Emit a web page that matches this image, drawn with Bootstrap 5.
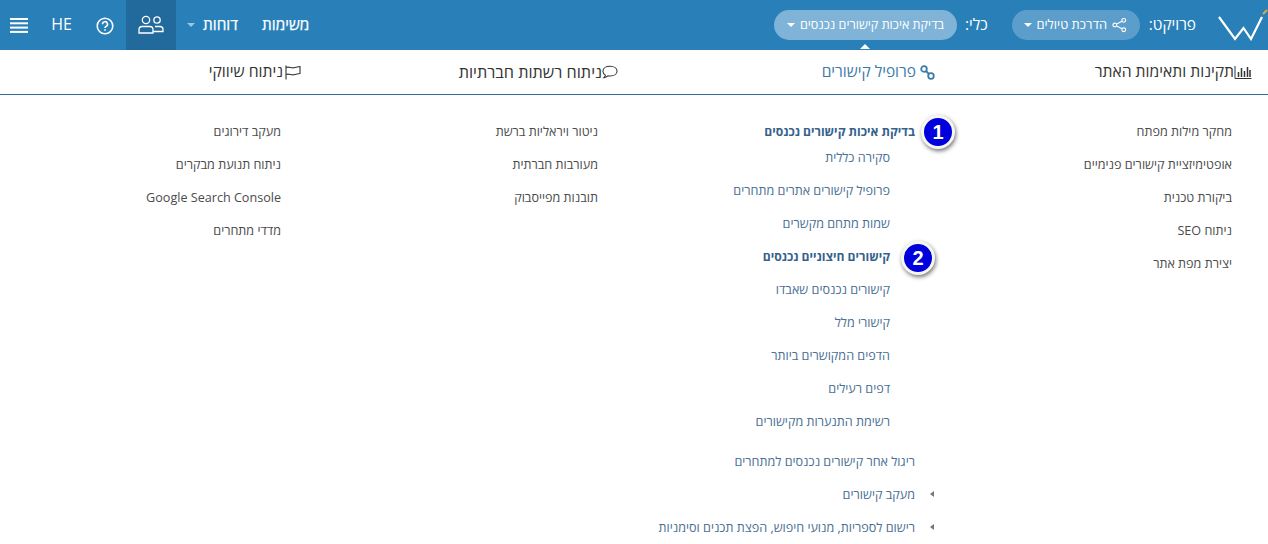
<!doctype html>
<html lang="he" dir="rtl">
<head>
<meta charset="utf-8">
<title>Menu</title>
<link href="https://cdn.jsdelivr.net/npm/bootstrap@5.3.0/dist/css/bootstrap.min.css" rel="stylesheet">
<style>
body{font-family:"Open Sans","Liberation Sans","DejaVu Sans",sans-serif;background:#fff;height:544px;overflow:hidden}
.topbar{height:50px;background:#2980b9;color:#fff}
.logo-box{width:72px}
.proj-label{font-size:15.4px;margin-left:8px}
.label-first{margin-left:9px}
.pill-a,.pill-b{height:30px;border-radius:15px;color:#fff;white-space:nowrap}
.pill-a{width:128px;background:#5b9dcb;padding:0 13px 0 12px;margin-left:24px;font-size:12.9px}
.pill-b{width:183px;background:#7fb3d7;position:relative;padding:0 13px;font-size:12.6px}
.pill-b::after{content:"";position:absolute;left:86px;top:34px;border:5px solid transparent;border-top:0;border-bottom-color:#fff}
.caret-w{width:0;height:0;border:4px solid transparent;border-top-color:#fff;border-bottom:0}
.caret-dim{border-top-color:#9cc5e0;margin-right:8px}
.nav-txt{font-size:15.4px;color:#fff;-webkit-text-stroke:.25px #fff}
.reports-txt{margin-right:24px}
.user-box{width:50px;height:50px;background:#236a9c;margin-right:11px}
.help-box{margin-right:12px;margin-top:2px}
.he-txt{font-size:16px;width:21px;margin-right:24px;text-align:center;line-height:1;margin-bottom:2px}
.burger-box{margin:0 23px 0 10px;line-height:0;margin-top:1px}
.tabs-row{height:45px;border-bottom:1px solid #2e6f94;display:grid;grid-template-columns:repeat(4,1fr)}
.tab-it{padding-right:16px;font-size:15.7px;color:#333;gap:2px}
.tab-tight{gap:0}
.tab-it.on{color:#3b7ca8;font-size:15.5px;gap:4px}
.tab-wide{font-size:16.2px}
.menu-grid{display:grid;grid-template-columns:repeat(4,1fr);padding-top:20px}
.menu-col{padding-right:36px}
.mi{height:33px;font-size:12.6px;color:#4b4b4b;line-height:33px;white-space:nowrap}
.mi-link{color:#4a6f94;position:relative}
.mi-head{font-weight:700;font-size:12.15px;color:#35628c}
.mi-top{height:26px;line-height:33px}
.mi-sub{padding-right:25px}
.mi-last{height:40px;line-height:33px}
.mi-arrow{display:flex;align-items:flex-start;position:relative}
.mi-arrow::before{content:"";position:absolute;right:-19px;top:13px;border:3px solid transparent;border-left:0;border-right:4px solid #777}
.num-dot{position:absolute;width:34px;height:34px;border-radius:50%;background:#0000dd;border:3px solid #f6f6f0;box-shadow:1px 2px 4px rgba(0,0,0,.55);color:#fff;font:700 20px/28px "Liberation Sans",sans-serif;text-align:center}
.num-1{right:-40px;top:-8px}
.num-2{right:-45px;top:-7px}
</style>
</head>
<body>
<header class="topbar d-flex justify-content-between align-items-center">
  <div class="d-flex align-items-center">
    <div class="logo-box d-flex align-items-center justify-content-start">
      <svg width="50" height="32" viewBox="0 0 50 32"><path d="M1 8 L17 30 L25.500 19 L33 30 L44 8" fill="none" stroke="#fff" stroke-width="2.200"/><path d="M45 5 L49 1" stroke="#e8a23c" stroke-width="2"/></svg>
    </div>
    <span class="proj-label label-first">פרויקט:</span>
    <div class="pill-a d-flex align-items-center justify-content-between">
      <svg width="15" height="16" viewBox="0 0 16 16" fill="none" stroke="#fff" stroke-width="1.2"><circle cx="12.500" cy="3" r="2"/><circle cx="12.500" cy="13" r="2"/><circle cx="3" cy="8" r="2"/><path d="M5 7 10.700 4M5 9l5.700 3"/></svg>
      <span>הדרכת טיולים</span>
      <span class="caret-w"></span>
    </div>
    <span class="proj-label">כלי:</span>
    <div class="pill-b d-flex align-items-center justify-content-between">
      <span>בדיקת איכות קישורים נכנסים</span>
      <span class="caret-w"></span>
    </div>
  </div>
  <div class="d-flex align-items-center">
    <span class="nav-txt">משימות</span>
    <span class="nav-txt reports-txt">דוחות</span>
    <span class="caret-w caret-dim"></span>
    <div class="user-box d-flex align-items-center justify-content-center">
      <svg width="26" height="20" viewBox="0 0 26 20" fill="none" stroke="#fff" stroke-width="1.300"><circle cx="8" cy="5" r="3.700"/><circle cx="19" cy="5" r="3.200"/><path d="M1 18v-3q0-3.500 3-3.500h8q3 0 3 3.500v3z"/><path d="M17 11.500h5q3 0 3 3v2h-10"/></svg>
    </div>
    <div class="help-box d-flex align-items-center">
      <svg width="18" height="18" viewBox="0 0 18 18" fill="none" stroke="#fff" stroke-width="1.600"><circle cx="9" cy="9" r="7.800"/><path d="M6.500 7.200a2.500 2.500 0 1 1 3.600 2.200q-1.100.6-1.100 1.700"/><path d="M9 12.300v1.400"/></svg>
    </div>
    <span class="he-txt" dir="ltr">HE</span>
    <div class="burger-box">
      <svg width="18" height="15" viewBox="0 0 18 15" fill="#fff"><rect y="0" width="18" height="2"/><rect y="4.300" width="18" height="2"/><rect y="8.600" width="18" height="2"/><rect y="12.900" width="18" height="2"/></svg>
    </div>
  </div>
</header>
<nav class="tabs-row">
  <div class="tab-it tab-tight d-flex align-items-center">
    <svg width="18" height="14" viewBox="0 0 17 14" fill="none" stroke="#333"><path d="M.5 1v12.500H17" /><path d="M4 12V7M7 12V3M10 12V6M13 12V2M15.500 12V5" stroke-width="1.500"/></svg>
    <span>תקינות ותאימות האתר</span>
  </div>
  <div class="tab-it on d-flex align-items-center">
    <svg width="15" height="15" viewBox="0 0 15 15" fill="none" stroke="#3b7ca8" stroke-width="1.800"><circle cx="4" cy="4" r="2.800"/><circle cx="11" cy="11" r="2.800"/><path d="M6 6l3 3"/></svg>
    <span>פרופיל קישורים</span>
  </div>
  <div class="tab-it tab-wide tab-tight d-flex align-items-center">
    <svg width="16" height="14" viewBox="0 0 17 14" fill="none" stroke="#333" stroke-width="1.100"><path d="M8.500 1C4 1 1 3.200 1 6.200c0 1.800 1 3.200 2.600 4.100-.2 1-.8 2-1.600 2.700 1.800-.2 3.200-.9 4.200-1.900.7.100 1.500.2 2.300.2 4.500 0 7.500-2.200 7.500-5.100S13 1 8.500 1z"/></svg>
    <span>ניתוח רשתות חברתיות</span>
  </div>
  <div class="tab-it d-flex align-items-center">
    <svg width="16" height="15" viewBox="0 0 16 15" fill="none" stroke="#333" stroke-width="1.100"><path d="M1 .5v14"/><path d="M1 2.500c3-1.500 5 1 8 .3 2-.4 4-1.300 6-1.300v7c-2 0-4 .9-6 1.300-3 .7-5-1.800-8-.3"/></svg>
    <span>ניתוח שיווקי</span>
  </div>
</nav>
<main class="menu-grid">
  <div class="menu-col">
    <div class="mi">מחקר מילות מפתח</div>
    <div class="mi">אופטימיזציית קישורים פנימיים</div>
    <div class="mi">ביקורת טכנית</div>
    <div class="mi">ניתוח SEO</div>
    <div class="mi">יצירת מפת אתר</div>
  </div>
  <div class="menu-col">
    <div class="mi mi-top mi-link mi-head"><span class="position-relative">בדיקת איכות קישורים נכנסים<span class="num-dot num-1">1</span></span></div>
    <div class="mi mi-link mi-sub">סקירה כללית</div>
    <div class="mi mi-link mi-sub">פרופיל קישורים אתרים מתחרים</div>
    <div class="mi mi-link mi-sub">שמות מתחם מקשרים</div>
    <div class="mi mi-link mi-sub mi-head"><span class="position-relative">קישורים חיצוניים נכנסים<span class="num-dot num-2">2</span></span></div>
    <div class="mi mi-link mi-sub">קישורים נכנסים שאבדו</div>
    <div class="mi mi-link mi-sub">קישורי מלל</div>
    <div class="mi mi-link mi-sub">הדפים המקושרים ביותר</div>
    <div class="mi mi-link mi-sub">דפים רעילים</div>
    <div class="mi mi-last mi-link mi-sub">רשימת התנערות מקישורים</div>
    <div class="mi mi-link">ריגול אחר קישורים נכנסים למתחרים</div>
    <div class="mi mi-link mi-arrow"><span>מעקב קישורים</span></div>
    <div class="mi mi-link mi-arrow"><span>רישום לספריות, מנועי חיפוש, הפצת תכנים וסימניות</span></div>
  </div>
  <div class="menu-col">
    <div class="mi">ניטור ויראליות ברשת</div>
    <div class="mi">מעורבות חברתית</div>
    <div class="mi">תובנות מפייסבוק</div>
  </div>
  <div class="menu-col">
    <div class="mi">מעקב דירוגים</div>
    <div class="mi">ניתוח תנועת מבקרים</div>
    <div class="mi">Google Search Console</div>
    <div class="mi">מדדי מתחרים</div>
  </div>
</main>
<script src="https://cdn.jsdelivr.net/npm/bootstrap@5.3.0/dist/js/bootstrap.bundle.min.js"></script>
</body>
</html>
